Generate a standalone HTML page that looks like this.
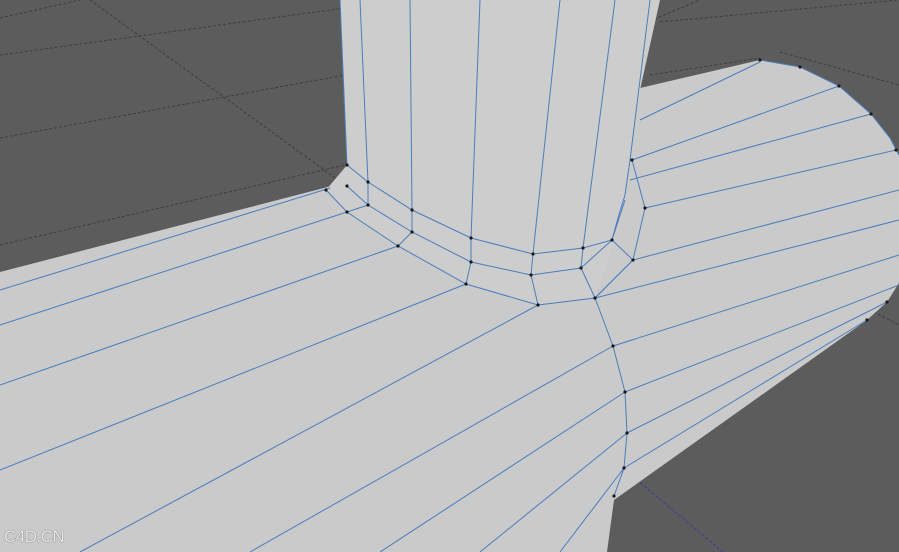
<!DOCTYPE html>
<html><head><meta charset="utf-8"><style>
html,body{margin:0;padding:0;background:#5b5b5b;width:899px;height:552px;overflow:hidden}
svg{display:block}
.t{position:absolute;left:4px;top:527px;font:17px "Liberation Sans",sans-serif;color:#e8e8e8;letter-spacing:-0.5px;text-shadow:0 0 1px #333}
</style></head><body>
<svg width="899" height="552" viewBox="0 0 899 552">
<rect width="899" height="552" fill="#5c5c5c"/>
<g stroke="#3e3e3e" stroke-width="1" stroke-dasharray="3,2" fill="none">
<line x1="0" y1="55" x2="345" y2="8"/>
<line x1="0" y1="138" x2="345" y2="75"/>
<line x1="0" y1="245" x2="345" y2="165"/>
<line x1="90" y1="0" x2="345" y2="185"/>
<line x1="0" y1="18" x2="80" y2="0"/>
<line x1="660" y1="22" x2="899" y2="0"/>
<line x1="650" y1="75" x2="760" y2="58"/>
<line x1="780" y1="52" x2="899" y2="85"/>
<line x1="640" y1="25" x2="700" y2="0"/>
<line x1="860" y1="305" x2="899" y2="325"/>
</g>
<line x1="625" y1="470" x2="723" y2="552" stroke="#3a3aa0" stroke-dasharray="3,2"/>
<polygon fill="#cacaca" points="0,272 347,182 640,88 760,60 800,67 839,86 871,114 890,138 899,155 899,283 887,302 867,320 614,500 607,552 0,552"/>
<polygon fill="#cdcdcd" points="340,0 660,0 640,90 630,160 625,200 615,240 595,298 540,305 470,285 400,245 347,212 326,190 347,165"/>
<g stroke="#4a7dbd" stroke-width="1" fill="none">
<polyline points="340,0 347,165"/>
<polyline points="360,0 368,182 368,205 347,212"/>
<polyline points="410,0 412,210 412,232 398,246"/>
<polyline points="480,0 471,238 471,262 466,284"/>
<polyline points="560,0 533,254 531,275 538,305"/>
<polyline points="615,0 583,248 581,268 595,298"/>
<polyline points="650,0 630,160 625,195 618,218 612,240 633,260 595,298"/>
<polyline points="347,165 368,182 412,210 471,238 533,254 583,248 612,240 625,200"/>
<polyline points="347,186 368,205 412,232 471,262 531,275 581,268 612,240"/>
<polyline points="326,190 347,212 398,246 466,284 538,305 595,298 633,260 645,208 632,160"/>
<polyline points="595,298 613,346 625,392 627,433 624,468 614,496"/>
<line x1="0" y1="290" x2="330" y2="188"/>
<line x1="0" y1="325" x2="347" y2="212"/>
<line x1="0" y1="385" x2="398" y2="246"/>
<line x1="0" y1="470" x2="466" y2="284"/>
<line x1="80" y1="552" x2="538" y2="305"/>
<line x1="250" y1="552" x2="613" y2="346"/>
<line x1="380" y1="552" x2="625" y2="392"/>
<line x1="480" y1="552" x2="627" y2="433"/>
<line x1="560" y1="552" x2="624" y2="468"/>
<line x1="640" y1="120" x2="760" y2="62"/>
<line x1="632" y1="160" x2="839" y2="86"/>
<line x1="630" y1="180" x2="871" y2="114"/>
<line x1="645" y1="208" x2="896" y2="150"/>
<line x1="633" y1="260" x2="899" y2="190"/>
<line x1="595" y1="298" x2="899" y2="220"/>
<line x1="613" y1="346" x2="899" y2="255"/>
<line x1="625" y1="392" x2="899" y2="285"/>
<line x1="627" y1="433" x2="887" y2="302"/>
<line x1="624" y1="468" x2="867" y2="320"/>
<polyline points="760,60 800,67 839,86 871,114 890,138 899,155"/>
</g>
<g fill="#1a1a1a">
<circle cx="347" cy="165" r="1.6"/><circle cx="368" cy="182" r="1.6"/><circle cx="412" cy="210" r="1.6"/><circle cx="471" cy="238" r="1.6"/><circle cx="533" cy="254" r="1.6"/><circle cx="583" cy="248" r="1.6"/><circle cx="612" cy="240" r="1.6"/>
<circle cx="347" cy="186" r="1.6"/><circle cx="368" cy="205" r="1.6"/><circle cx="412" cy="232" r="1.6"/><circle cx="471" cy="262" r="1.6"/><circle cx="531" cy="275" r="1.6"/><circle cx="581" cy="268" r="1.6"/>
<circle cx="326" cy="190" r="1.6"/><circle cx="347" cy="212" r="1.6"/><circle cx="398" cy="246" r="1.6"/><circle cx="466" cy="284" r="1.6"/><circle cx="538" cy="305" r="1.6"/><circle cx="595" cy="298" r="1.6"/><circle cx="633" cy="260" r="1.6"/><circle cx="645" cy="208" r="1.6"/><circle cx="632" cy="160" r="1.6"/>
<circle cx="613" cy="346" r="1.6"/><circle cx="625" cy="392" r="1.6"/><circle cx="627" cy="433" r="1.6"/><circle cx="624" cy="468" r="1.6"/><circle cx="614" cy="496" r="1.6"/>
<circle cx="760" cy="60" r="1.6"/><circle cx="800" cy="67" r="1.6"/><circle cx="839" cy="86" r="1.6"/><circle cx="871" cy="114" r="1.6"/><circle cx="896" cy="150" r="1.6"/><circle cx="887" cy="302" r="1.6"/><circle cx="867" cy="320" r="1.6"/>
</g>
</svg>
<div class="t">C4D.CN</div>
</body></html>
